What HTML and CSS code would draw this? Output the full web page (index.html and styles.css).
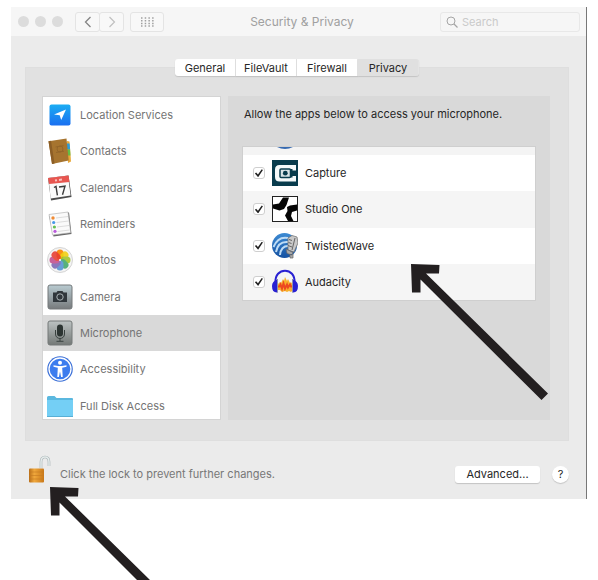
FILE: index.html
```html
<!DOCTYPE html>
<html lang="en">
<head>
<meta charset="utf-8">
<meta name="viewport" content="width=device-width, initial-scale=1">
<title>Security &amp; Privacy</title>
<link rel="stylesheet" href="styles.css">
</head>
<body>
<main class="window">
  <header class="titlebar">
    <div class="lights"><span></span><span></span><span></span></div>
    <div class="nav">
      <button type="button" aria-label="Back"><svg width="8" height="12" viewBox="0 0 8 12"><path d="M6.500 1 1.500 6l5 5" fill="none" stroke="#858585" stroke-width="1.300"/></svg></button>
      <button type="button" aria-label="Forward"><svg width="8" height="12" viewBox="0 0 8 12"><path d="M1.500 1l5 5-5 5" fill="none" stroke="#c0c0c0" stroke-width="1.200"/></svg></button>
    </div>
    <button type="button" class="grid-button" aria-label="Show all"><svg width="13" height="10" viewBox="0 0 13 10"><path d="M0 1h13M0 3.700h13M0 6.400h13M0 9.100h13" stroke="#a0a0a0" stroke-width="1.500" stroke-dasharray="1.500 2.200"/></svg></button>
    <h1>Security &amp; Privacy</h1>
    <label class="search">
      <svg width="12" height="12" viewBox="0 0 12 12"><circle cx="5" cy="5" r="4" fill="none" stroke="#a5a5a5"/><path d="M8 8l3.500 3.500" stroke="#a5a5a5" stroke-width="1.200"/></svg>
      <input type="search" placeholder="Search" aria-label="Search">
    </label>
  </header>

  <section class="content">
    <nav class="tabs">
      <button type="button">General</button>
      <button type="button">FileVault</button>
      <button type="button">Firewall</button>
      <button type="button" class="active">Privacy</button>
    </nav>
    <div class="panel">
      <div class="services">
        <ul>
          <li>
            <svg class="icon" viewBox="0 0 26 26"><defs><linearGradient id="loc" x2="0" y2="1"><stop stop-color="#1badf3"/><stop offset="1" stop-color="#1a6ff0"/></linearGradient></defs><rect x="2.500" y="2.500" width="21" height="21" rx="2" fill="url(#loc)"/><path d="M19 7.500 14.200 18l-1.500-4.800L7 12.400z" fill="#fff"/></svg>
            Location Services</li>
          <li>
            <svg class="icon" viewBox="0 0 26 26"><path d="M20 3l2.500.5 1.500 20-3 1.500z" fill="#e9a93a"/><path d="M20 5.500h2.600l.5 6H20z" fill="#2b9ddd"/><path d="M20 11.500h3.100l.4 6H20z" fill="#63bd45"/><path d="M1.500 3.200 19.500 0.500 21.700 22.500 5 26z" fill="#a6742f"/><path d="M1.500 3.200 4 2.800 7.500 25.500 5 26z" fill="#8c5e26"/><path d="M8.500 9l8-1.300M9 14.500l8-1.300" stroke="#936529"/><circle cx="13" cy="11" r="3" fill="none" stroke="#936529"/></svg>
            Contacts</li>
          <li>
            <svg class="icon" viewBox="0 0 26 26"><path d="M1 3 21.500 0.500 24.500 22 4 25.500z" fill="#4b4b4b"/><path d="M1.500 3 21 1 23.600 20.500 3.600 23.500z" fill="#fafafa"/><path d="M1 3 21.500 0.500 22.500 7 2 9z" fill="#e85650"/><path d="M8 5.500l2-.3M12 5l3-.4" stroke="#f9c1bd" stroke-width="2"/><path d="M7 12.500l2-1.200 1.400 9M12 12l6-.8-2.500 8.500" fill="none" stroke="#3b3b3b" stroke-width="1.400"/></svg>
            Calendars</li>
          <li>
            <svg class="icon" viewBox="0 0 26 26"><path d="M2 4.500 22 1.500 24.500 23 6.500 25.500z" fill="#666"/><path d="M2 3.500 21 1 23.700 21.700 5.500 24z" fill="#fafafa" stroke="#aaa" stroke-width=".6"/><path d="M9 7l12-1.500M9.500 11.500l12-1.500M10 16l12-1.500M10.500 20.500l12-1.500" stroke="#d4d4d4" stroke-width=".8"/><circle cx="6" cy="7" r="1.700" fill="#f08b35"/><circle cx="6.700" cy="11.500" r="1.600" fill="#4598e8"/><circle cx="7.400" cy="16" r="1.600" fill="#65c052"/><circle cx="8" cy="20.300" r="1.600" fill="#bb5bdd"/></svg>
            Reminders</li>
          <li>
            <svg class="icon" viewBox="0 0 26 26"><circle cx="13" cy="13" r="12.500" fill="#f4f4f4" stroke="#d4d4d4"/><rect x="9.500" y="2.500" width="7" height="10" rx="3.500" fill="#f98e16"/><g opacity=".88"><rect x="9.500" y="2.500" width="7" height="10" rx="3.500" fill="#f2cf10" transform="rotate(45 13 13)"/><rect x="9.500" y="2.500" width="7" height="10" rx="3.500" fill="#a3c528" transform="rotate(90 13 13)"/><rect x="9.500" y="2.500" width="7" height="10" rx="3.500" fill="#42a86b" transform="rotate(135 13 13)"/><rect x="9.500" y="2.500" width="7" height="10" rx="3.500" fill="#5593d2" transform="rotate(180 13 13)"/><rect x="9.500" y="2.500" width="7" height="10" rx="3.500" fill="#7b68b5" transform="rotate(225 13 13)"/><rect x="9.500" y="2.500" width="7" height="10" rx="3.500" fill="#c34f8d" transform="rotate(270 13 13)"/><rect x="9.500" y="2.500" width="7" height="10" rx="3.500" fill="#e83d30" transform="rotate(315 13 13)"/></g><circle cx="13" cy="13" r="1" fill="#fff"/></svg>
            Photos</li>
          <li>
            <svg class="icon" viewBox="0 0 26 26"><defs><linearGradient id="metal" x2="0" y2="1"><stop stop-color="#b9cbd1"/><stop offset="1" stop-color="#777a7c"/></linearGradient></defs><rect x="1" y="1" width="24" height="24" rx="2" fill="url(#metal)" stroke="#74797b"/><path d="M6 8.500h3.500l1-1.500h5l1 1.500H20v9.500H6z" fill="#30363b"/><circle cx="13" cy="13" r="3.200" fill="#30363b" stroke="#aab2b5"/></svg>
            Camera</li>
          <li class="selected">
            <svg class="icon" viewBox="0 0 26 26"><defs><linearGradient id="metal2" x2="0" y2="1"><stop stop-color="#bcc2c2"/><stop offset="1" stop-color="#737876"/></linearGradient></defs><rect x="1" y="1" width="24" height="24" rx="2" fill="url(#metal2)" stroke="#747978"/><rect x="10" y="4.500" width="6" height="12" rx="3" fill="#2c3432"/><path d="M8.500 10v4c0 6 9 6 9 0v-4M13 18.500V21M9.500 21.300h7" fill="none" stroke="#39413f"/></svg>
            Microphone</li>
          <li>
            <svg class="icon" viewBox="0 0 26 26"><circle cx="13" cy="13" r="12.800" fill="#3b70d8"/><circle cx="13" cy="13" r="11" fill="#3c7cee" stroke="#fff" stroke-width="1.300"/><circle cx="13" cy="6.700" r="2" fill="#fff"/><path d="M6.500 9.200 11 10h4l4.500-.8v1.600l-4.300 1L15.700 21h-1.600L13 15.500 11.900 21h-1.600l.5-9.200-4.300-1z" fill="#fff"/></svg>
            Accessibility</li>
          <li>
            <svg class="icon" viewBox="0 0 26 26"><path d="M0 4.500q0-1.500 1.500-1.500h6l2 2H25q1 0 1 1v17.500H0z" fill="#5bb8df"/><path d="M0 7h26v16.500H0z" fill="#74cff5"/><path d="M0 23.500h26" stroke="#58afd5"/></svg>
            Full Disk Access</li>
        </ul>
      </div>
      <div class="access">
        <p>Allow the apps below to access your microphone.</p>
        <div class="apps">
          <div class="clipped"><svg width="26" height="8" viewBox="0 0 26 8"><path d="M5 0h16q-8 4-16 0" fill="#386bb1"/></svg></div>
          <label><input type="checkbox" checked>
            <svg class="icon" viewBox="0 0 26 26"><rect width="26" height="26" fill="#093c4d"/><path d="M24 5v5.500h-3.500V9H9v8.500h11.500V16H24v5.500H7.500Q3 21.500 3 17V9.500Q3 5 7.500 5z" fill="#f5fafb"/><rect x="8" y="9" width="10.500" height="8.500" rx="1" fill="#d9e4e7" stroke="#093c4d" stroke-width="1.500"/><circle cx="13.300" cy="13.200" r="2.400" fill="#093c4d"/></svg>
            <span>Capture</span></label>
          <label><input type="checkbox" checked>
            <svg class="icon" viewBox="0 0 26 26"><rect x=".5" y=".5" width="25" height="25" fill="#fff" stroke="#222"/><path d="M1 8.500 7 7.500 11 1.500h6L14.500 9 12 13 7.500 14.500 1 12.500zM15 11 18 9.500 25 8.500V14.500L20 16 19 20 21.500 25H16L13 19.500 15.500 15z" fill="#050505"/></svg>
            <span>Studio One</span></label>
          <label><input type="checkbox" checked>
            <svg class="icon" viewBox="0 0 26 26"><defs><linearGradient id="wave" x2="0" y2="1"><stop stop-color="#3d8bd3"/><stop offset="1" stop-color="#1551a1"/></linearGradient></defs><circle cx="12.500" cy="12.500" r="12.500" fill="url(#wave)"/><path d="M1.500 14Q6 3 16 5M4 19Q6 8 16 9M8 22Q9 13 16 13" fill="none" stroke="#bedcf5" stroke-width="2"/><path d="M16 5 20 2.500l5 1.500 1 6-4 9-6-2z" fill="#c9c9c9" stroke="#777" stroke-width=".8"/><path d="M17 6.500l3 1M16.500 9.500l3 1M16 12.500l4 1.500M23 5l-3 12" stroke="#666" stroke-width="1"/><path d="M14 16l7 3.500-1 2.500-5-1.500zM18 21v4h3v-4" fill="#aaa" stroke="#666" stroke-width=".7"/></svg>
            <span>TwistedWave</span></label>
          <label><input type="checkbox" checked>
            <svg class="icon" viewBox="0 0 26 26"><path d="M6 21V15l2-2 1 1 2-4 1 2 1-4 2 4 1-2 2 4 1-1 2 3v5l-2 2-2-1-2 1-2-1-3 1-2-2z" fill="#f8b02b"/><path d="M5.500 17.500h2l1-2 1.500 4 1.500-5 1.500 5 2-4 1 3 2-3 1 2h2" fill="none" stroke="#ed4921" stroke-width="2"/><path d="M3.500 14C2-2.500 24-2.500 22.500 14" fill="none" stroke="#2921d2" stroke-width="2"/><path d="M5.500 10.500v13Q0 24 0 17q0-5 5.500-6.500zM20.500 10.500v13q5.500.5 5.500-6.500 0-5-5.500-6.500z" fill="#2921d2"/><path d="M5.500 10v13.500M20.500 10v13.500" stroke="#8c8eb0"/></svg>
            <span>Audacity</span></label>
        </div>
      </div>
    </div>
  </section>

  <footer>
    <svg class="lock" viewBox="0 0 24 30"><defs><linearGradient id="gold"><stop stop-color="#b86d18"/><stop offset=".35" stop-color="#f0a83c"/><stop offset="1" stop-color="#c97819"/></linearGradient></defs><path d="M12 14V8Q12 3 16 3T20 8v4" fill="none" stroke="#a3b0b2" stroke-width="2.600"/><path d="M12 14V8Q12 3 16 3T20 8v4" fill="none" stroke="#e6ecec" stroke-width="1.500"/><rect x="0" y="14.500" width="15" height="14" rx="1" fill="url(#gold)"/><path d="M0 18h15M0 21.500h15M0 25h15" stroke="#c47a22" stroke-width=".6"/></svg>
    <p>Click the lock to prevent further changes.</p>
    <button type="button" class="advanced">Advanced...</button>
    <button type="button" class="help">?</button>
  </footer>
</main>
<svg class="arrow arrow-list" width="137" height="137" viewBox="0 0 137 137" aria-hidden="true"><path d="M0 0 28.500 1 28 9.500H15L137 129.500 130.500 136 9.500 15.500V28.500H1z" fill="#231f20"/></svg>
<svg class="arrow arrow-lock" width="100" height="93" viewBox="0 0 100 93" aria-hidden="true"><path d="M0 0 28.500 1 28 9.500H15L100 93H87L9.500 15.500V28.500H1z" fill="#231f20"/></svg>
</body>
</html>
```
FILE: styles.css
```css
* { box-sizing: border-box; }

body {
  margin: 0;
  padding: 7px 11px 0;
  background: #fff;
  color: #262626;
  font: 11px/16px Inter, "Liberation Sans", sans-serif;
}

button, input { font: inherit; color: inherit; }
button { border: 0; padding: 0; }
p, h1, ul { margin: 0; padding: 0; }
svg { display: block; flex: none; }

.window {
  background: #ebebeb;
  border-right: 1px solid #777;
}

.titlebar {
  display: flex;
  align-items: center;
  height: 29px;
  padding: 0 6px 0 7px;
  background: #f6f6f6;
}

.lights { display: flex; gap: 6px; margin-right: 12px; }
.lights span { width: 11px; height: 11px; border-radius: 50%; background: #dcdcdc; }

.nav { display: flex; margin-right: 6px; }
.nav button, .grid-button {
  display: flex;
  align-items: center;
  justify-content: center;
  height: 20px;
  border: 1px solid #e4e4e4;
  border-radius: 3px;
  background: #f8f8f8;
}
.nav button { width: 25px; }
.nav button + button { margin-left: -1px; }
.grid-button { width: 34px; }

h1 {
  flex: 1;
  font-size: 12px;
  font-weight: 400;
  text-align: center;
  color: #a0a0a0;
}

.search {
  display: flex;
  align-items: center;
  gap: 4px;
  width: 140px;
  height: 20px;
  padding: 0 5px;
  border: 1px solid #e8e8e8;
  border-radius: 3px;
}
.search input {
  width: 100%;
  min-width: 0;
  padding: 0;
  border: 0;
  outline: 0;
  background: none;
}
.search input::placeholder { color: #cacaca; opacity: 1; }

.content { padding: 23px 17px 0 14px; }

.tabs {
  position: relative;
  display: flex;
  justify-content: center;
  margin-bottom: -9px;
}
.tabs button {
  width: 61px;
  height: 17px;
  background: #fff;
  border-right: 1px solid #e4e4e4;
  box-shadow: 0 1px 1px #c4c4c4;
}
.tabs button:first-child { border-radius: 3px 0 0 3px; }
.tabs .active { background: #e0e0e0; border-radius: 0 3px 3px 0; }

.panel {
  display: grid;
  grid-template-columns: 5fr 9fr;
  gap: 7px;
  padding: 28px 18px 20px 16px;
  border: 1px solid #dedede;
  background: #e1e1e1;
}

.services {
  height: 324px;
  overflow: hidden;
  background: #fff;
  border: 1px solid #d4d4d4;
}
.services ul {
  display: grid;
  grid-auto-rows: 1fr;
  height: 327px;
  list-style: none;
}
.services li {
  display: flex;
  align-items: center;
  gap: 7px;
  padding-left: 4px;
  color: #747474;
}
.services .selected { background: #d9d9d9; }
.icon { width: 26px; height: 26px; }

.access {
  padding: 10px 14px;
  background: #d9d9d9;
}
.access p { padding: 0 2px; }

.apps {
  display: grid;
  grid-template-rows: 8px repeat(4, 1fr);
  height: 155px;
  margin-top: 24px;
  border: 1px solid #cfcfcf;
  background: #fff;
}
.clipped { padding-left: 29px; background: #f4f4f4; }
.apps label {
  display: flex;
  align-items: center;
  gap: 7px;
  padding-left: 10px;
}
.apps label:nth-child(odd) { background: #f5f5f5; }
.apps input {
  appearance: none;
  display: grid;
  place-items: center;
  width: 12px;
  height: 12px;
  margin: 0;
  border: 1px solid #cfcfcf;
  border-radius: 3px;
  background: #fff;
}
.apps input:checked::before {
  content: "";
  width: 8px;
  height: 8px;
  background: #222;
  clip-path: polygon(0 55%, 15% 42%, 38% 68%, 85% 0, 100% 10%, 40% 100%);
}

footer {
  display: flex;
  align-items: center;
  height: 58px;
  padding: 8px 17px 0 18px;
}
.lock { width: 24px; height: 30px; margin-right: 7px; margin-bottom: 10px; }
footer p { color: #777; flex: 1; }
.advanced {
  width: 85px;
  height: 17px;
  margin-right: 12px;
  border-radius: 3px;
  background: #fff;
  box-shadow: 0 1px 1px #c4c4c4;
}
.help {
  width: 17px;
  height: 17px;
  border-radius: 50%;
  background: #fff;
  box-shadow: 0 1px 1px #c4c4c4;
}

.arrow { position: absolute; }
.arrow-list { left: 411px; top: 264px; }
.arrow-lock { left: 50px; top: 487px; }
```
